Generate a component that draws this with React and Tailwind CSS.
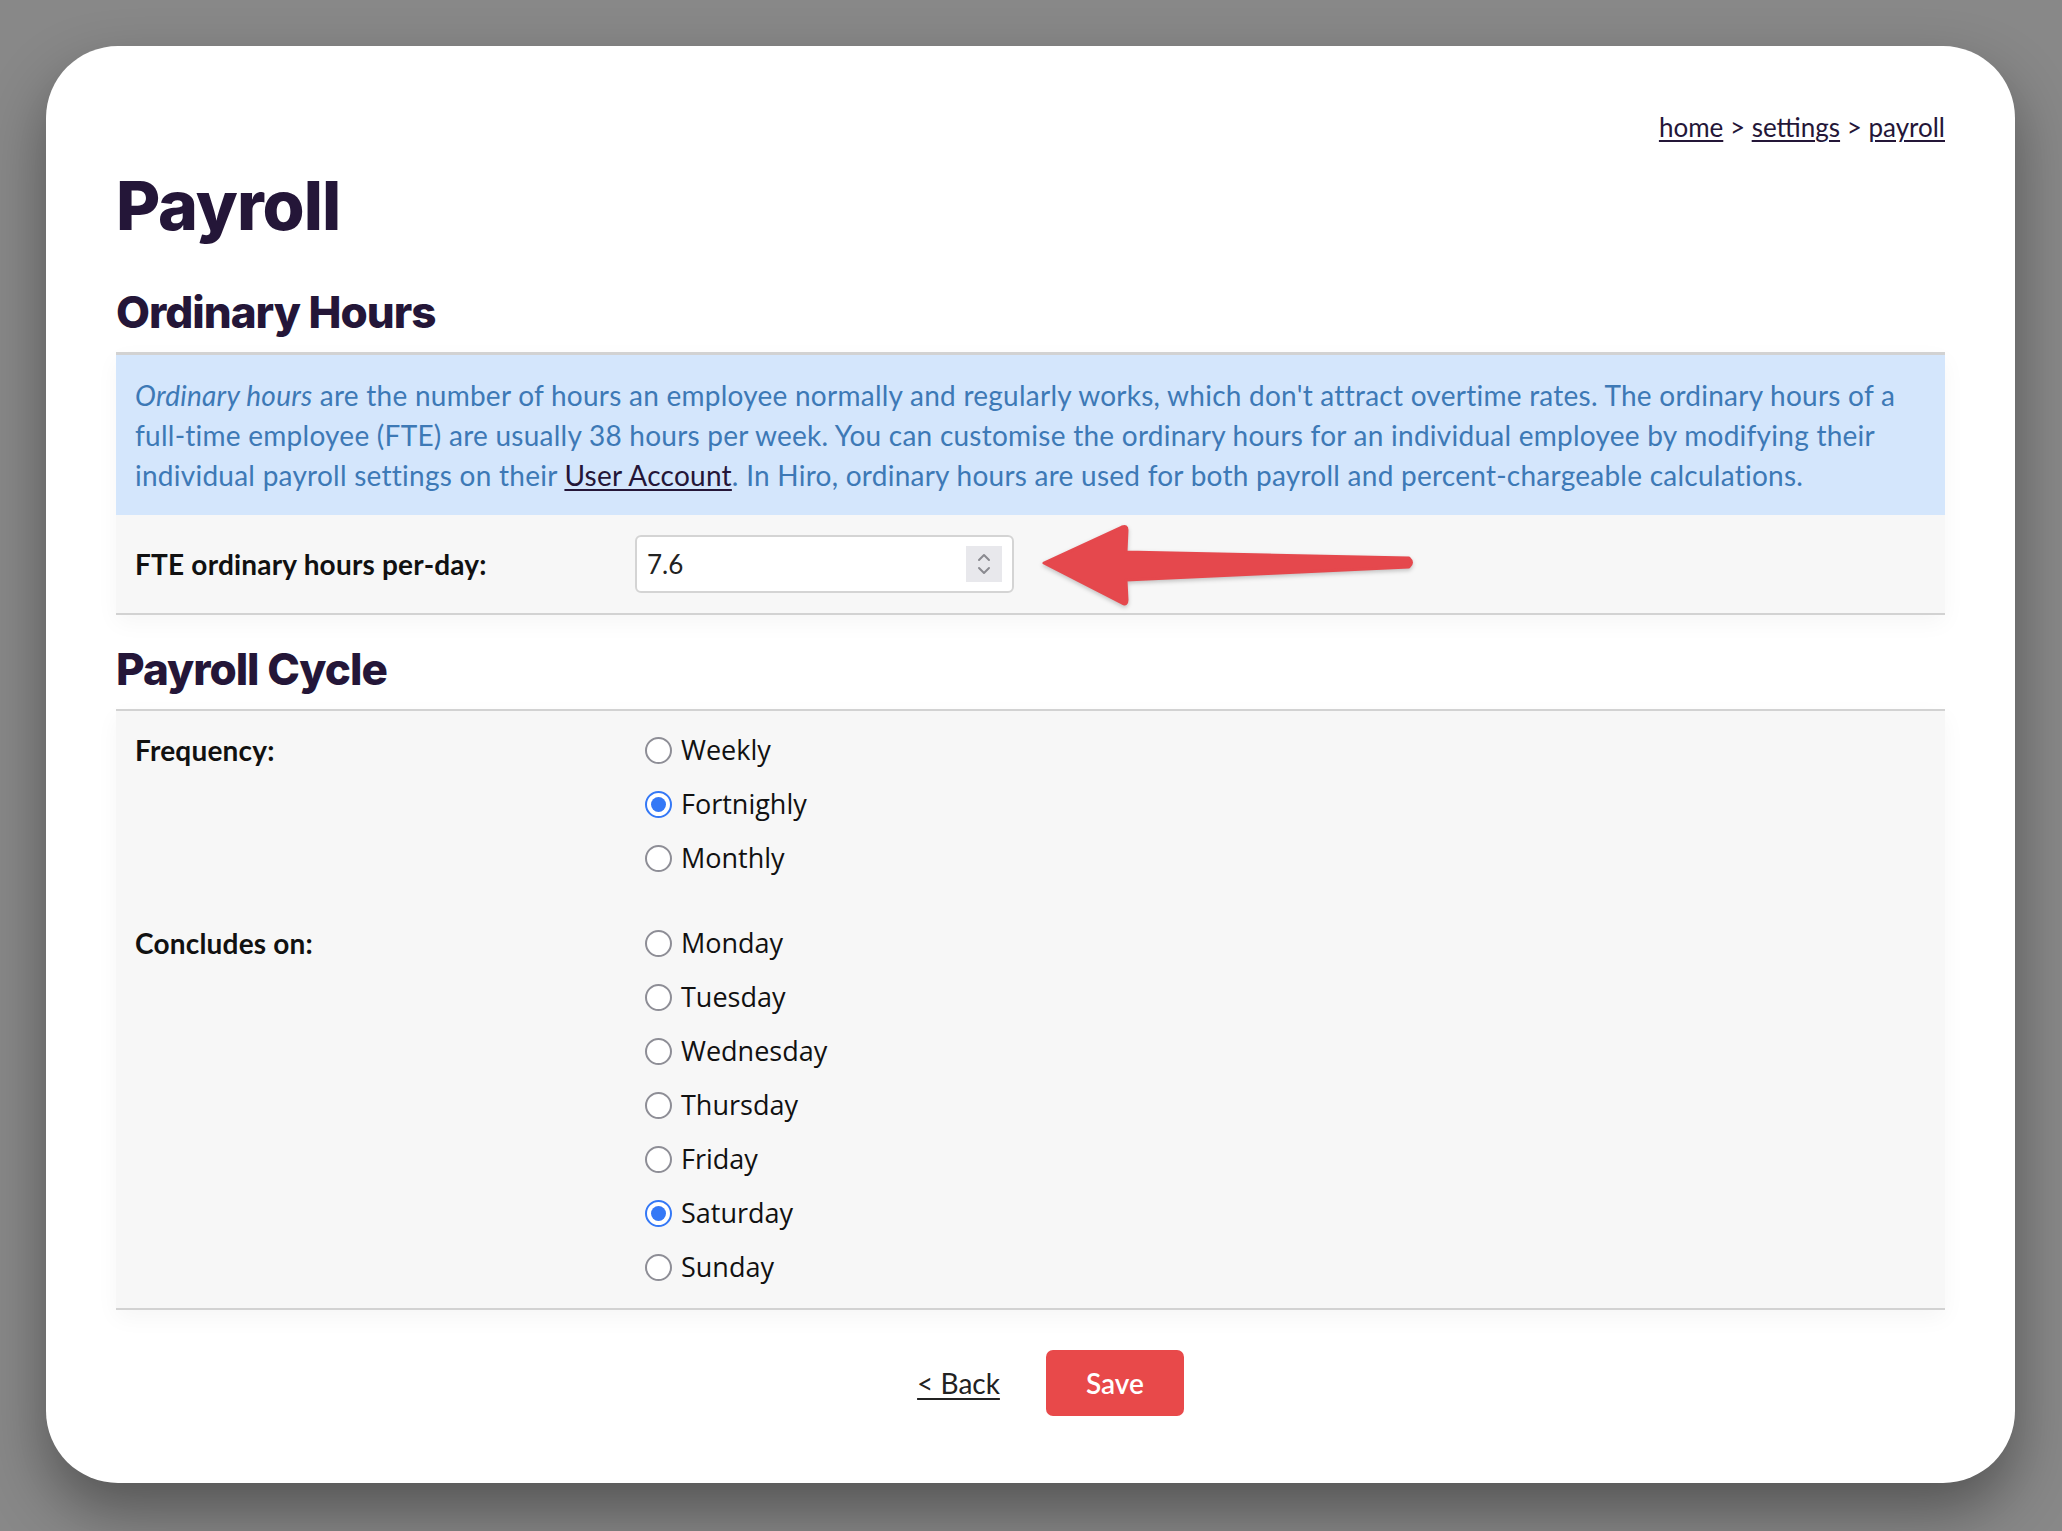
import React from "react";

const body = { fontFamily: "Lato, 'Noto Sans', sans-serif" };
const head = { fontFamily: "Inter, 'Noto Sans', sans-serif" };
const radioFont = { fontFamily: "'Open Sans', 'Noto Sans', sans-serif" };

function Radio({ label, checked }) {
  return (
    <div className="flex h-[54px] items-center">
      {checked ? (
        <span className="flex h-[27px] w-[27px] items-center justify-center rounded-full border-2 border-[#3478f6] bg-white">
          <span className="h-[15px] w-[15px] rounded-full bg-[#3478f6]" />
        </span>
      ) : (
        <span className="h-[27px] w-[27px] rounded-full border-2 border-[#8e8e96] bg-white" />
      )}
      <span className="ml-[9px] text-[27px] text-[#111]" style={radioFont}>
        {label}
      </span>
    </div>
  );
}

export default function App() {
  return (
    <div className="min-h-screen bg-[#888888] p-[46px]" style={body}>
      <div className="h-[1437px] w-[1969px] rounded-[72px] bg-white px-[70px] pt-[65px] shadow-[0_28px_60px_rgba(0,0,0,0.38)]">
        {/* breadcrumb */}
        <div className="h-[32px] text-right text-[26px] leading-[32px] text-[#241638]">
          <a className="underline underline-offset-[3px]">home</a>
          <span> &gt; </span>
          <a className="underline underline-offset-[3px]">settings</a>
          <span> &gt; </span>
          <a className="underline underline-offset-[3px]">payroll</a>
        </div>

        <h1
          className="mt-[28px] text-[68px] font-extrabold leading-[68px] tracking-[-1px] text-[#241638]"
          style={head}
        >
          Payroll
        </h1>

        <h2
          className="mt-[51px] text-[44px] font-extrabold leading-[44px] tracking-[-1px] text-[#241638]"
          style={head}
        >
          Ordinary Hours
        </h2>

        <div className="mt-[18px] shadow-[0_8px_22px_rgba(0,0,0,0.04)]">
          <div className="border-t-[3px] border-[#d2d2d2] bg-[#d4e6fc] px-[19px] py-[20px] text-[28px] leading-[40px] tracking-[0.25px] text-[#3d79b6]">
            <em>Ordinary hours</em> are the number of hours an employee normally and regularly works, which don't attract overtime rates. The ordinary hours of a
            <br />
            full-time employee (FTE) are usually 38 hours per week. You can customise the ordinary hours for an individual employee by modifying their
            <br />
            individual payroll settings on their{" "}
            <a className="text-[#241638] underline underline-offset-[3px]">User Account</a>. In Hiro, ordinary hours are used for both payroll and percent-chargeable calculations.
          </div>
          <div className="flex h-[100px] items-center border-b-2 border-[#d2d2d2] bg-[#f7f7f7] pl-[19px]">
            <div className="w-[500px] text-[28px] font-bold tracking-[0.2px] text-[#111]">FTE ordinary hours per-day:</div>
            <div className="flex h-[58px] w-[379px] items-center justify-between rounded-[6px] border-2 border-[#d4d4d4] bg-white pl-[10px] pr-[10px]">
              <span className="text-[26px] text-[#222]">7.6</span>
              <span className="flex h-[36px] w-[36px] flex-col items-center justify-center bg-[#e8e8ec]">
                <svg width="16" height="28" viewBox="0 0 16 28" fill="none" stroke="#8a8a90" strokeWidth="2" strokeLinecap="round" strokeLinejoin="round">
                  <path d="M3 10 L8 5 L13 10" />
                  <path d="M3 18 L8 23 L13 18" />
                </svg>
              </span>
            </div>
            <svg
              className="ml-[26px] drop-shadow-[0_2px_2px_rgba(0,0,0,0.22)]"
              width="376"
              height="90"
              viewBox="0 0 376 90"
            >
              <path
                d="M4 44 L82 8 Q87 6 87 11 L86 33 L369 39 Q374 43.5 369 48 L86 61 L87 81 Q87 87 82 84 Z"
                fill="#e5484d"
                stroke="#e5484d"
                strokeWidth="3"
                strokeLinejoin="round"
              />
            </svg>
          </div>
        </div>

        <h2
          className="mt-[32px] text-[44px] font-extrabold leading-[44px] tracking-[-1px] text-[#241638]"
          style={head}
        >
          Payroll Cycle
        </h2>

        <div className="mt-[18px] border-y-2 border-[#d2d2d2] bg-[#f7f7f7] pb-[14px] pl-[19px] pt-[12px] shadow-[0_8px_22px_rgba(0,0,0,0.04)]">
          <div className="flex">
            <div className="w-[510px] text-[28px] font-bold leading-[54px] tracking-[0.2px] text-[#111]">Frequency:</div>
            <div className="flex flex-col">
              <Radio label="Weekly" />
              <Radio label="Fortnighly" checked />
              <Radio label="Monthly" />
            </div>
          </div>
          <div className="mt-[31px] flex">
            <div className="w-[510px] text-[28px] font-bold leading-[54px] tracking-[0.2px] text-[#111]">Concludes on:</div>
            <div className="flex flex-col">
              <Radio label="Monday" />
              <Radio label="Tuesday" />
              <Radio label="Wednesday" />
              <Radio label="Thursday" />
              <Radio label="Friday" />
              <Radio label="Saturday" checked />
              <Radio label="Sunday" />
            </div>
          </div>
        </div>

        <div className="mt-[40px] flex items-center justify-center pl-[40px]">
          <a className="text-[28px] text-[#222] underline underline-offset-[4px]">&lt; Back</a>
          <button className="ml-[46px] h-[66px] w-[138px] rounded-[7px] bg-[#e8494a] text-[28px] font-semibold text-white">
            Save
          </button>
        </div>
      </div>
    </div>
  );
}
